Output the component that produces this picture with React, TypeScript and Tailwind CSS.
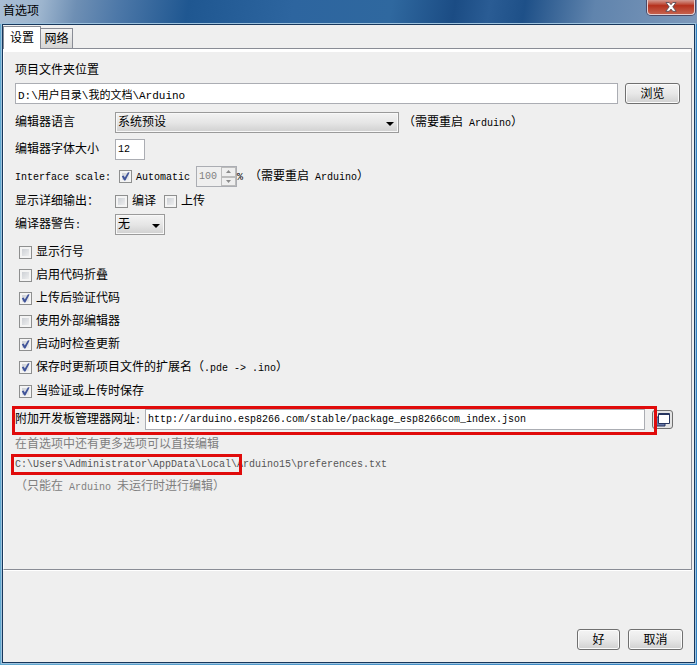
import React from 'react';

const fieldBorder = 'border border-[#abadb3]';
const buttonLook =
  'rounded-[3px] border border-[#707070] bg-linear-to-b from-[#f4f4f4] via-[#e8e8e8] via-50% to-[#d0d0d0] pt-[2px] shadow-[inset_0_0_0_1px_#fbfbfb]';

function En({ children }: { children: React.ReactNode }) {
  return <span className="text-[10px] whitespace-pre">{children}</span>;
}

function Check({ checked = false, children }: { checked?: boolean; children: React.ReactNode }) {
  return (
    <label className="flex items-center gap-1 whitespace-pre">
      <span className="relative flex h-[13px] w-[13px] shrink-0">
        <input
          type="checkbox"
          defaultChecked={checked}
          className="peer h-[13px] w-[13px] appearance-none border border-[#8e8f8f] bg-linear-to-br from-[#c4c8ce] to-[#f6f6f6] shadow-[inset_0_0_0_2px_#f4f4f4]"
        />
        <svg
          viewBox="0 0 13 13"
          className="pointer-events-none absolute inset-0 hidden h-[13px] w-[13px] peer-checked:block"
        >
          <path d="M2.8 6.2 4.6 5.4 5.8 7.4 9 2.2 10.6 2.4 6.4 10.6 5.1 10.6Z" fill="#40549a" />
        </svg>
      </span>
      <span className="pt-[2px]">{children}</span>
    </label>
  );
}

function Dropdown({ id, value, className }: { id: string; value: string; className: string }) {
  return (
    <div className={`relative h-[21px] ${className}`}>
      <select
        id={id}
        className="block h-[21px] w-full appearance-none border border-[#9a9a9a] bg-linear-to-b from-[#f3f3f3] via-[#e6e6e6] via-50% to-[#d0d0d0] pt-px pl-[2px] shadow-[inset_0_0_0_1px_#f8f8f8]"
      >
        <option>{value}</option>
      </select>
      <svg viewBox="0 0 8 4" className="pointer-events-none absolute top-[10px] right-[5px] h-1 w-2">
        <path d="M0 0h8L4 4Z" fill="#000" />
      </svg>
    </div>
  );
}

const options = [
  { text: '显示行号', checked: false },
  { text: '启用代码折叠', checked: false },
  { text: '上传后验证代码', checked: true },
  { text: '使用外部编辑器', checked: false },
  { text: '启动时检查更新', checked: true },
  { text: <>保存时更新项目文件的扩展名（<En>.pde -&gt; .ino</En>）</>, checked: true },
  { text: '当验证或上传时保存', checked: true },
];

export default function App() {
  return (
    <div className="flex min-h-screen flex-col bg-linear-to-r from-[#62a9d0] to-[#2f7fc0] px-[2px] pb-[2px] font-['Liberation_Mono','Noto_Sans_CJK_SC',monospace] text-[12px] leading-4 text-black">
      <header className="-mx-[2px] flex h-6 items-start justify-between bg-[linear-gradient(100deg,#a9bed4_0%,#9db5ce_6%,#6e8fb4_11%,#4d78a8_17%,#1f5791_27%,#2d659f_42%,#2f689f_56%,#1b4c84_65%,#2a5c94_70%,#1e5088_75%,#6084ad_85%,#7d98ba_100%)] pr-[2px] pl-[3px]">
        <h1 className="pt-1">首选项</h1>
        <button
          aria-label="关闭"
          className="flex h-[15px] w-12 items-center justify-center rounded-b-[4px] border border-t-0 border-[#e6cfd0] bg-linear-to-b from-[#d29a92] via-[#b5301c] via-40% to-[#c5604c] shadow-[0_0_0_1px_#4b4a66]"
        >
          <svg viewBox="0 0 12 10" className="h-[10px] w-3">
            <path d="M1 .5h3.2L6 2.7 7.8.5H11L7.8 4.8 11.2 9.3H7.8L6 7.1 4.2 9.3H.8L4.2 4.8Z" fill="#fff" stroke="#4d4552" strokeWidth=".8" />
          </svg>
        </button>
      </header>

      <main className="flex grow flex-col border border-[#17375c] bg-[#efefef] shadow-[0_0_0_1px_#9fc3de]">
        <div role="tablist" className="flex items-end pt-px">
          <button role="tab" aria-selected="true" className="relative z-10 -mb-px h-[23px] w-[38px] border border-b-0 border-[#898c95] bg-white pt-px">
            设置
          </button>
          <button role="tab" aria-selected="false" className="h-5 w-8 border border-b-0 border-l-0 border-[#898c95] bg-linear-to-b from-[#f2f2f2] to-[#d6d6d6] pt-[3px]">
            网络
          </button>
        </div>

        <section className="mr-[2px] flex grow flex-col border border-[#898c95] border-l-white bg-[#efefef] px-[11px] shadow-[inset_0_3px_0_#fff,0_1px_0_#fff]">
          <label htmlFor="folder" className="mt-[14px]">项目文件夹位置</label>
          <div className="mt-1 flex gap-[7px]">
            <input
              id="folder"
              defaultValue="D:\用户目录\我的文档\Arduino"
              className={`h-[21px] min-w-0 grow bg-white px-[2px] text-[11px] ${fieldBorder}`}
            />
            <button className={`h-[21px] w-[55px] ${buttonLook}`}>浏览</button>
          </div>

          <div className="mt-2 flex h-[21px] items-center">
            <label htmlFor="language" className="w-[100px] shrink-0 pt-px">编辑器语言</label>
            <Dropdown id="language" value="系统预设" className="w-[284px]" />
            <span className="ml-1 pt-px">（需要重启<En> Arduino</En>）</span>
          </div>

          <div className="mt-[6px] flex h-[21px] items-center">
            <label htmlFor="size" className="w-[100px] shrink-0 pt-px">编辑器字体大小</label>
            <input id="size" defaultValue="12" className={`h-[21px] w-[30px] bg-white px-[2px] text-[10px] ${fieldBorder}`} />
          </div>

          <div className="mt-[6px] flex h-[21px] items-center">
            <span className="w-[104px] shrink-0 pt-px"><En>Interface scale:</En></span>
            <Check checked><En>Automatic</En></Check>
            <div className={`ml-[6px] flex h-[21px] w-[41px] ${fieldBorder}`}>
              <input aria-label="Interface scale" disabled defaultValue="100" className="w-6 pl-[2px] text-[10px] text-[#808080]" />
              <div className="flex grow flex-col">
                <button disabled aria-label="Increase" className="flex grow items-center justify-center border border-[#bcbcbc]">
                  <svg viewBox="0 0 5 3" className="h-[3px] w-[5px]"><path d="M0 3 2.5 0 5 3Z" fill="#8a8a8a" /></svg>
                </button>
                <button disabled aria-label="Decrease" className="flex grow items-center justify-center border border-[#bcbcbc]">
                  <svg viewBox="0 0 5 3" className="h-[3px] w-[5px]"><path d="M0 0h5L2.5 3Z" fill="#8a8a8a" /></svg>
                </button>
              </div>
            </div>
            <span className="pt-px"><En>%</En></span>
            <span className="ml-[6px] pt-px">（需要重启<En> Arduino</En>）</span>
          </div>

          <div className="mt-[5px] flex h-[18px] items-center">
            <span className="w-[100px] shrink-0 pt-px">显示详细输出：</span>
            <Check>编译</Check>
            <span className="ml-2"><Check>上传</Check></span>
          </div>

          <div className="mt-1 flex h-[21px] items-center">
            <label htmlFor="warnings" className="w-[100px] shrink-0 pt-px">编译器警告<En>:</En></label>
            <Dropdown id="warnings" value="无" className="w-[50px]" />
          </div>

          <div className="mt-2 flex flex-col gap-[5px] pl-1">
            {options.map((option, i) => (
              <Check key={i} checked={option.checked}>{option.text}</Check>
            ))}
          </div>

          <div className="relative mt-[9px] flex h-[21px] items-center">
            <label htmlFor="urls" className="w-[130px] shrink-0 pt-px">附加开发板管理器网址<En>:</En></label>
            <input
              id="urls"
              defaultValue="http://arduino.esp8266.com/stable/package_esp8266com_index.json"
              className={`h-[21px] min-w-0 grow bg-white px-[2px] text-[10px] ${fieldBorder}`}
            />
            <button aria-label="编辑网址" className="mx-[7px] flex h-[19px] w-[21px] items-center justify-center rounded-[3px] border border-[#707070] bg-[#e4e4e4]">
              <svg viewBox="0 0 16 14" className="h-[14px] w-4">
                <path d="M1 4h9v9H1Z" fill="#6878a8" stroke="#26355f" />
                <path d="M3.5.5h11v10h-11Z" fill="#fff" stroke="#26355f" />
                <path d="M3 1h12v1H3Z" fill="#26355f" />
              </svg>
            </button>
            <div className="pointer-events-none absolute -top-[3px] right-[23px] -bottom-[5px] -left-[3px] border-3 border-[#e00b0b]" />
          </div>

          <p className="mt-[7px] text-[#808080]">在首选项中还有更多选项可以直接编辑</p>
          <p className="mt-[3px] text-[#555]">
            <span className="relative inline-block">
              <En>C:\Users\Administrator\AppData\Local\</En>
              <span className="pointer-events-none absolute -top-[2px] -right-[5px] -bottom-[2px] -left-1 border-3 border-[#e00b0b]" />
            </span>
            <En>Arduino15\preferences.txt</En>
          </p>
          <p className="mt-[6px] mb-[67px] text-[#808080]">（只能在<En> Arduino </En>未运行时进行编辑）</p>
        </section>

        <footer className="flex justify-end gap-2 pt-[59px] pr-[11px] pb-3">
          <button className={`h-[21px] w-[43px] ${buttonLook}`}>好</button>
          <button className={`h-[21px] w-[55px] ${buttonLook}`}>取消</button>
        </footer>
      </main>
    </div>
  );
}
